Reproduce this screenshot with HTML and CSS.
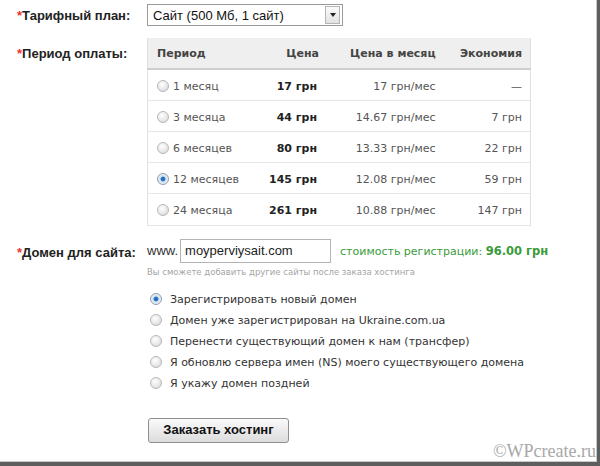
FILE: index.html
```html
<!DOCTYPE html>
<html lang="ru">
<head>
<meta charset="utf-8">
<link rel="stylesheet" href="styles.css">
</head>
<body>
<div class="page">
  <div class="row row-plan">
    <div class="label"><span class="req">*</span>Тарифный план:</div>
    <div class="select">
      <span class="select-text">Сайт (500 Мб, 1 сайт)</span>
      <span class="select-btn"><span class="tri"></span></span>
    </div>
  </div>

  <div class="row row-period">
    <div class="label label-period"><span class="req">*</span>Период оплаты:</div>
    <table class="prices">
      <colgroup>
        <col class="c1"><col class="c2"><col class="c3"><col class="c4">
      </colgroup>
      <thead>
        <tr><th class="left">Период</th><th>Цена</th><th>Цена в месяц</th><th>Экономия</th></tr>
      </thead>
      <tbody>
        <tr><td class="left"><span class="radio"></span>1 месяц</td><td class="b">17 грн</td><td>17 грн/мес</td><td>—</td></tr>
        <tr><td class="left"><span class="radio"></span>3 месяца</td><td class="b">44 грн</td><td>14.67 грн/мес</td><td>7 грн</td></tr>
        <tr><td class="left"><span class="radio"></span>6 месяцев</td><td class="b">80 грн</td><td>13.33 грн/мес</td><td>22 грн</td></tr>
        <tr><td class="left"><span class="radio on"></span>12 месяцев</td><td class="b">145 грн</td><td>12.08 грн/мес</td><td>59 грн</td></tr>
        <tr><td class="left"><span class="radio"></span>24 месяца</td><td class="b">261 грн</td><td>10.88 грн/мес</td><td>147 грн</td></tr>
      </tbody>
    </table>
  </div>

  <div class="row row-domain">
    <div class="label"><span class="req">*</span>Домен для сайта:</div>
    <div class="domain">
      <span class="www">www.</span>
      <span class="input">moyperviysait.com</span>
      <span class="cost">стоимость регистрации: <b>96.00 грн</b></span>
    </div>
  </div>
  <div class="hint">Вы сможете добавить другие сайты после заказа хостинга</div>

  <ul class="options">
    <li><span class="radio on"></span>Зарегистрировать новый домен</li>
    <li><span class="radio"></span>Домен уже зарегистрирован на Ukraine.com.ua</li>
    <li><span class="radio"></span>Перенести существующий домен к нам (трансфер)</li>
    <li><span class="radio"></span>Я обновлю сервера имен (NS) моего существующего домена</li>
    <li><span class="radio"></span>Я укажу домен поздней</li>
  </ul>

  <div class="actions">
    <span class="button">Заказать хостинг</span>
  </div>
  <div class="mark">©WPcreate.ru</div>
</div>
</body>
</html>
```

FILE: styles.css
```css
* { box-sizing: border-box; }
html, body { margin: 0; padding: 0; background: #fff; }
.page {
  position: relative;
  width: 600px;
  height: 466px;
  border-right: 3px solid #5e5e5e;
  border-bottom: 4px solid #5e5e5e;
  box-shadow: inset -1px -1px 0 #c8c8c8;
  padding: 4px 0 0 17px;
  font-family: "Liberation Sans", Arial, sans-serif;
  color: #222;
  overflow: hidden;
}
.row { display: flex; align-items: flex-start; }
.label {
  width: 130px;
  font-weight: bold;
  font-size: 13px;
  color: #222;
  white-space: nowrap;
}
.req { color: #e33; }
.row-plan .label { padding-top: 4px; }

.select {
  width: 196px;
  height: 22px;
  border: 1px solid #9a9a9a;
  display: flex;
  align-items: center;
  justify-content: space-between;
  font-size: 13px;
  color: #111;
  padding-left: 5px;
}
.select-btn {
  width: 15px;
  height: 18px;
  margin-right: 2px;
  border: 1px solid #b5b5b5;
  background: linear-gradient(#fbfbfb, #e2e2e2);
  display: flex;
  align-items: center;
  justify-content: center;
}
.tri {
  width: 0; height: 0;
  border-left: 3px solid transparent;
  border-right: 3px solid transparent;
  border-top: 4px solid #222;
}

.row-period { margin-top: 12px; }
.label-period { padding-top: 8px; }
.prices {
  width: 384px;
  border-collapse: collapse;
  font-family: "DejaVu Sans", Verdana, sans-serif;
  font-size: 11px;
  border: 1px solid #e0e0e0;
  border-top: none;
}
.c1 { width: 112px; } .c2 { width: 68px; } .c3 { width: 117px; } .c4 { width: 87px; }
.prices th {
  background: #efefef;
  height: 31px;
  font-weight: bold;
  color: #444;
  text-align: right;
  padding: 0 8px 0 0;
  border-bottom: 2px solid #cfcfcf;
}
.prices td {
  height: 31px;
  color: #555;
  text-align: right;
  padding: 3px 8px 0 0;
  border-bottom: 1px solid #e6e6e6;
}
.prices tbody tr:last-child td { height: 32px; }
.prices th.left { text-align: left; padding-left: 9px; }
.prices td.left { text-align: left; padding-left: 9px; }
.prices td.b { font-weight: bold; color: #222; padding-right: 10px; }

.radio {
  display: inline-block;
  vertical-align: -2px;
  width: 12px;
  height: 12px;
  border-radius: 50%;
  border: 1px solid #b8b8b8;
  background: radial-gradient(circle at 40% 35%, #ffffff 0%, #e6e6e6 60%, #cfcfcf 100%);
  margin-right: 4px;
}
.radio.on {
  background: radial-gradient(circle at 50% 50%, #1d5fae 0%, #2f79c9 28%, #cfe0f0 40%, #eeeeee 70%, #d0d0d0 100%);
  border-color: #8a9fb8;
}

.row-domain { margin-top: 13px; }
.row-domain .label { padding-top: 6px; }
.domain { display: flex; align-items: center; font-size: 13px; }
.www { color: #333; margin-right: 2px; }
.input {
  width: 151px;
  height: 24px;
  border: 1px solid #b4b4b4;
  padding: 3px 0 0 4px;
  color: #222;
}
.cost {
  margin-left: 9px;
  color: #3a9b3a;
  font-family: "DejaVu Sans", Verdana, sans-serif;
  font-size: 11px;
}
.cost b { font-size: 11.5px; }
.hint {
  margin: 4px 0 0 130px;
  font-family: "DejaVu Sans", Verdana, sans-serif;
  font-size: 8.5px;
  color: #a5a5a5;
}

.options {
  list-style: none;
  margin: 16px 0 0 133px;
  padding: 0;
  font-family: "DejaVu Sans", Verdana, sans-serif;
  font-size: 11px;
  color: #333;
}
.options li { height: 21px; line-height: 14px; }
.options .radio { margin-right: 8px; }

.actions { margin: 20px 0 0 131px; }
.button {
  display: inline-block;
  width: 141px;
  height: 25px;
  line-height: 22px;
  text-align: center;
  font-weight: bold;
  font-size: 13px;
  color: #111;
  border: 1px solid #8f8f8f;
  border-radius: 3px;
  background: linear-gradient(#fafafa, #dcdcdc);
}
.mark {
  position: absolute;
  right: 1px;
  bottom: 0;
  font-family: "Liberation Serif", "Times New Roman", serif;
  font-size: 18px;
  color: #a8a8a8;
}
```
